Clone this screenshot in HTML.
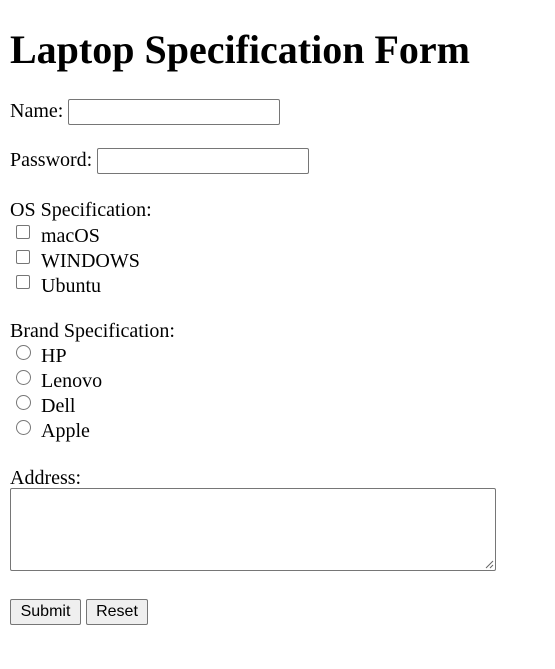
<!DOCTYPE html>
<html>
<head>
<meta charset="utf-8">
<style>
body { margin: 0; font-family: "Liberation Serif", serif; font-size: 20px; color: #000; background: #fff; }
.t { position: absolute; line-height: 24px; white-space: nowrap; margin-top: 1px; }
h1 { position: absolute; left: 10px; top: 24px; margin: 0; font-size: 40px; line-height: 52px; font-weight: bold; }
.in { position: absolute; box-sizing: border-box; border: 1px solid #767676; border-radius: 2px; background: #fff; }
.cb { position: absolute; box-sizing: border-box; width: 14px; height: 14px; border: 1px solid #767676; border-radius: 2px; background: #fff; }
.rd { position: absolute; box-sizing: border-box; width: 15px; height: 15px; border: 1px solid #767676; border-radius: 50%; background: #fff; }
.btn { position: absolute; box-sizing: border-box; border: 1px solid #767676; border-radius: 2px; background: #efefef; font-family: "Liberation Sans", sans-serif; font-size: 16px; line-height: 24px; text-align: center; }
</style>
</head>
<body>
<h1>Laptop Specification Form</h1>
<div class="t" style="left:10px;top:98px">Name:</div>
<div class="in" style="left:68px;top:99px;width:212px;height:26px"></div>
<div class="t" style="left:10px;top:147px">Password:</div>
<div class="in" style="left:97px;top:148px;width:212px;height:26px"></div>
<div class="t" style="left:10px;top:197px">OS Specification:</div>
<div class="cb" style="left:16px;top:225px"></div><div class="t" style="left:41px;top:223px">macOS</div>
<div class="cb" style="left:16px;top:250px"></div><div class="t" style="left:41px;top:248px">WINDOWS</div>
<div class="cb" style="left:16px;top:275px"></div><div class="t" style="left:41px;top:273px">Ubuntu</div>
<div class="t" style="left:10px;top:318px">Brand Specification:</div>
<div class="rd" style="left:16px;top:345px"></div><div class="t" style="left:41px;top:343px">HP</div>
<div class="rd" style="left:16px;top:370px"></div><div class="t" style="left:41px;top:368px">Lenovo</div>
<div class="rd" style="left:16px;top:395px"></div><div class="t" style="left:41px;top:393px">Dell</div>
<div class="rd" style="left:16px;top:420px"></div><div class="t" style="left:41px;top:418px">Apple</div>
<div class="t" style="left:10px;top:465px">Address:</div>
<div class="in" style="left:10px;top:488px;width:486px;height:83px">
<svg style="position:absolute;right:1px;bottom:1px" width="10" height="10"><path d="M9 2 L2 9 M9 6 L6 9" stroke="#666" stroke-width="1"/></svg>
</div>
<div class="btn" style="left:10px;top:599px;width:71px;height:26px">Submit</div>
<div class="btn" style="left:86px;top:599px;width:62px;height:26px">Reset</div>
</body>
</html>
